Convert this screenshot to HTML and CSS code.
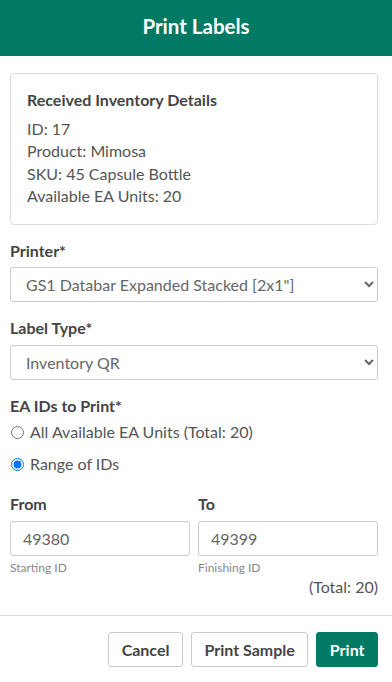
FILE: index.html
```html
<!DOCTYPE html>
<html>
<head>
<meta charset="utf-8">
<link rel="stylesheet" href="styles.css">
</head>
<body>
<header class="header">Print Labels</header>
<main class="content">
  <section class="card">
    <div class="card-title">Received Inventory Details</div>
    <div class="line">ID: 17</div>
    <div class="line">Product: Mimosa</div>
    <div class="line">SKU: 45 Capsule Bottle</div>
    <div class="line">Available EA Units: 20</div>
  </section>

  <div class="field">
    <label class="label">Printer*</label>
    <select class="select"><option>GS1 Databar Expanded Stacked [2x1"]</option></select>
  </div>

  <div class="field">
    <label class="label">Label Type*</label>
    <select class="select"><option>Inventory QR</option></select>
  </div>

  <div class="field radios">
    <label class="label">EA IDs to Print*</label>
    <label class="radio"><input type="radio" name="ea"> All Available EA Units (Total: 20)</label>
    <label class="radio"><input type="radio" name="ea" checked> Range of IDs</label>
  </div>

  <div class="range">
    <div class="range-col">
      <label class="label">From</label>
      <input class="input" type="text" value="49380">
      <div class="help">Starting ID</div>
    </div>
    <div class="range-col">
      <label class="label">To</label>
      <input class="input" type="text" value="49399">
      <div class="help">Finishing ID</div>
    </div>
  </div>
  <div class="total">(Total: 20)</div>
</main>
<footer class="footer">
  <button class="btn">Cancel</button>
  <button class="btn">Print Sample</button>
  <button class="btn btn-primary">Print</button>
</footer>
</body>
</html>
```

FILE: styles.css
```css
* { box-sizing: border-box; }
html, body { margin: 0; padding: 0; background: #fff; }
body {
  font-family: Lato, "Liberation Sans", sans-serif;
  font-size: 16px;
  line-height: 22.5px;
  color: #555;
  width: 392px;
}
.header {
  height: 56px;
  background: #007a64;
  color: #fff;
  font-weight: 700;
  font-size: 20.5px;
  display: flex;
  align-items: center;
  justify-content: center;
  padding-bottom: 4px;
}
.content { padding: 17px 14px 0 10px; }
.card {
  border: 1px solid #ddd;
  border-radius: 4px;
  padding: 15px 15px 16px 16px;
  margin-bottom: 15px;
}
.card-title { font-weight: 700; color: #444; margin-bottom: 6px; }
.field { display: flex; flex-direction: column; margin-bottom: 15px; }
.label { font-weight: 700; color: #444; line-height: 22.5px; margin-bottom: 5px; }
.select {
  height: 35px;
  width: 100%;
  border: 1px solid #ccc;
  border-radius: 3px;
  background: #fff;
  font-family: Lato, "Liberation Sans", sans-serif;
  font-size: 16px;
  color: #666;
  padding: 0 6px 0 11px;
}
.radios { margin-bottom: 0; }
.radios .label { margin-bottom: 4px; }
.radio {
  display: flex;
  align-items: center;
  gap: 6px;
  line-height: 22.5px;
  margin-bottom: 9.5px;
  color: #555;
}
.radio input { margin: 0 0 0 1px; width: 13px; height: 13px; }
.range { display: flex; gap: 8px; margin-top: 8px; }
.range-col { flex: 1; display: flex; flex-direction: column; }
.input {
  height: 35px;
  width: 100%;
  border: 1px solid #ccc;
  border-radius: 3px;
  font-family: Lato, "Liberation Sans", sans-serif;
  font-size: 16px;
  color: #666;
  padding: 0 12px;
}
.help { font-size: 12px; color: #888; line-height: 16px; margin-top: 4.5px; }
.total { text-align: right; line-height: 22.5px; }
.footer {
  margin-top: 16px;
  border-top: 1px solid #ddd;
  padding: 16px 14px 15px 10px;
  display: flex;
  justify-content: flex-end;
  gap: 8px;
}
.btn {
  height: 35px;
  padding: 0 12.5px;
  border: 1px solid #ccc;
  border-radius: 3px;
  background: #fff;
  font-family: Lato, "Liberation Sans", sans-serif;
  font-weight: 700;
  font-size: 16px;
  color: #444;
}
.btn-primary { background: #007a64; border-color: #007a64; color: #fff; }
```
